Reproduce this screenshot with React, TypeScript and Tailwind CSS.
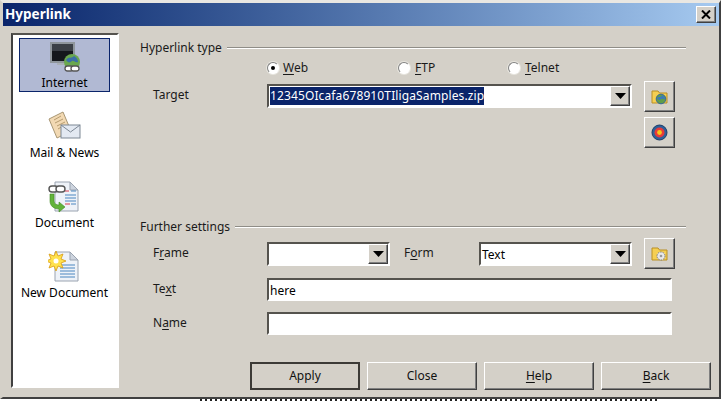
import React from "react";

const raised = "border border-t-white border-l-white border-r-[#404040] border-b-[#404040] shadow-[inset_-1px_-1px_0_#808080]";
const sunken = "border-2 border-t-[#55534e] border-l-[#55534e] border-r-white border-b-white";

function U({ children }: { children: React.ReactNode }) {
  return <span className="underline underline-offset-2 decoration-1">{children}</span>;
}

function Arrow() {
  return (
    <div className={`w-[20px] h-full bg-[#d4d0c8] flex items-center justify-center ${raised}`}>
      <svg width="11" height="6" viewBox="0 0 11 6"><path d="M0 0h11L5.5 6z" fill="#000" /></svg>
    </div>
  );
}

function Radio({ checked }: { checked?: boolean }) {
  return (
    <div className="w-[12px] h-[12px] rounded-full bg-white border border-t-[#808080] border-l-[#808080] border-r-white border-b-white flex items-center justify-center shadow-[0_0_0_1px_#e8e6e0]">
      {checked && <div className="w-[4px] h-[4px] rounded-full bg-black" />}
    </div>
  );
}

function Group({ title }: { title: string }) {
  return (
    <div className="flex items-center h-[16px] w-[546px]">
      <span className="text-[12px] leading-none text-[#1a1a1a] whitespace-nowrap">{title}</span>
      <div className="ml-[5px] grow h-[2px] border-t border-t-[#8f8d87] border-b border-b-white" />
    </div>
  );
}

function IconBtn({ children, className = "" }: { children: React.ReactNode; className?: string }) {
  return (
    <div className={`w-[31px] h-[31px] bg-[#d4d0c8] flex items-center justify-center ${raised} ${className}`}>{children}</div>
  );
}

function Monitor() {
  return (
    <svg width="32" height="32" viewBox="0 0 32 32">
      <rect x="1" y="1" width="25" height="21" fill="#8f969c" />
      <rect x="3" y="3" width="21" height="17" fill="#15181c" />
      <rect x="3" y="3" width="21" height="7" fill="#3b4046" />
      <rect x="8" y="22" width="12" height="2" fill="#aab0b6" />
      <circle cx="23" cy="21" r="8" fill="#6aa84f" />
      <path d="M17 19c3-4 6-1 8-4 2 1 4 3 4 6-3 1-4-2-6-1s-3 3-6-1z" fill="#3a6fa8" />
      <rect x="16" y="25" width="8" height="5" rx="2.5" fill="#fff" stroke="#555" strokeWidth="1.3" />
      <rect x="22" y="25" width="8" height="5" rx="2.5" fill="#fff" stroke="#555" strokeWidth="1.3" />
    </svg>
  );
}

function Mail() {
  return (
    <svg width="33" height="33" viewBox="0 0 33 33">
      <path d="M1 8 15 1l8 19-14 7z" fill="#f2d9b3" stroke="#a89674" />
      <path d="M6 9l7-4M7 12l8-4M9 15l8-4M10 18l5-3" stroke="#b69c70" />
      <rect x="13" y="14" width="19" height="13" fill="#e3e9f2" stroke="#7c8794" />
      <path d="M13 14l9.5 7L32 14" fill="none" stroke="#7c8794" />
    </svg>
  );
}

function DocBase() {
  return (
    <>
      <path d="M7 1h15l8 8v21H7z" fill="#eef2f8" stroke="#9aa3b0" />
      <path d="M22 1v8h8z" fill="#cdd4de" stroke="#9aa3b0" />
    </>
  );
}

function DocLink() {
  return (
    <svg width="33" height="32" viewBox="0 0 33 32">
      <DocBase />
      <path d="M17 10h4M17 23h5" stroke="#d63a4a" strokeWidth="1.2" />
      <path d="M17 14h11M17 17h11M17 20h11M23 23h5M23 10h5" stroke="#4a86c0" strokeWidth="1" />
      <rect x="1" y="5" width="9" height="6" rx="3" fill="#fff" stroke="#555" strokeWidth="1.4" />
      <rect x="8" y="5" width="9" height="6" rx="3" fill="#fff" stroke="#555" strokeWidth="1.4" />
      <path d="M2 13h4v7c0 3 3 4 5 4v-3l6 5-6 5v-3c-5 0-9-3-9-8z" fill="#62b33a" stroke="#3f8a22" strokeWidth=".6" />
    </svg>
  );
}

function DocNew() {
  return (
    <svg width="33" height="32" viewBox="0 0 33 32">
      <DocBase />
      <path d="M12 14h15M12 17h15M12 20h15M12 23h15M12 26h15" stroke="#4a86c0" strokeWidth="1" />
      <path d="M8 0l2 5 5-2-2 5 5 2-5 2 2 5-5-2-2 5-2-5-5 2 2-5-5-2 5-2-2-5 5 2z" fill="#ffe14d" stroke="#d89c12" strokeWidth=".8" />
      <circle cx="8" cy="10" r="2.5" fill="#fff" />
    </svg>
  );
}

function Folder({ gear }: { gear?: boolean }) {
  return (
    <svg width="17" height="17" viewBox="0 0 17 17">
      <path d="M1 3h6l1.5 2H16v10H1z" fill="#f5cf52" stroke="#b98f24" />
      {gear ? (
        <>
          <circle cx="10" cy="11" r="4" fill="#e8e8e8" stroke="#777" strokeDasharray="1.5 1" />
          <circle cx="10" cy="11" r="1.3" fill="#999" />
        </>
      ) : (
        <>
          <circle cx="10" cy="11" r="4.8" fill="#5f9e4a" stroke="#35689c" />
          <path d="M6 10c2-2 4 0 5-3 2 1 3 2 3 4-2 1-3-1-4 0s-2 2-4-1z" fill="#3a7ab8" />
        </>
      )}
    </svg>
  );
}

function Target() {
  return (
    <svg width="17" height="17" viewBox="0 0 17 17">
      <circle cx="8.5" cy="8.5" r="7.5" fill="#2d5f9a" stroke="#1c3c68" />
      <circle cx="8.5" cy="8.5" r="5" fill="#e63a3a" />
      <circle cx="8.5" cy="8.5" r="2.4" fill="#f5c518" />
    </svg>
  );
}

function NavItem({ label, icon, selected, h }: { label: string; icon: React.ReactNode; selected?: boolean; h: string }) {
  return (
    <div className={`w-[91px] ${h} flex flex-col items-center pt-[2px] border ${selected ? "bg-[#b1b9d3] border-[#0a246a]" : "border-transparent"}`}>
      <div className="h-[32px] flex items-center justify-center">{icon}</div>
      <span className="mt-[3px] text-[12px] leading-[14px] text-black whitespace-nowrap">{label}</span>
    </div>
  );
}

function Combo({ w, text, children }: { w: string; text?: string; children?: React.ReactNode }) {
  return (
    <div className={`${w} h-[24px] bg-white flex items-stretch ${sunken}`}>
      <div className={`grow pl-[1px] text-[12px] text-black whitespace-nowrap overflow-hidden ${text ? "leading-[22px]" : "leading-[20px]"}`}>
        {children ?? text}
      </div>
      <Arrow />
    </div>
  );
}

function Label({ children, className = "" }: { children: React.ReactNode; className?: string }) {
  return <div className={`text-[12px] leading-[16px] text-[#1a1a1a] ${className}`}>{children}</div>;
}

function Btn({ children, dflt }: { children: React.ReactNode; dflt?: boolean }) {
  return (
    <div className={`w-[110px] h-[28px] bg-[#d4d0c8] flex items-center justify-center text-[12px] text-[#111] ${dflt ? "border-2 border-[#3c3a36]" : raised}`}>
      {children}
    </div>
  );
}

export default function App() {
  return (
    <div className="w-[722px] h-[401px] overflow-hidden bg-white" style={{ fontFamily: '"Noto Sans", sans-serif' }}>
      <div className="w-[721px] h-[399px] bg-[#d4d0c8] border-t-[3px] border-t-[#e9e7e2] border-l-[3px] border-l-[#d4d0c8] border-r-2 border-r-[#404040] border-b-2 border-b-[#404040] flex flex-col">
        <div className="h-[23px] shrink-0 flex items-center justify-between bg-gradient-to-r from-[#0a246a] to-[#a6caf0] pl-[2px] pr-[3px]">
          <span className="text-[13.5px] font-bold text-white leading-none">Hyperlink</span>
          <div className={`w-[20px] h-[17px] bg-[#d4d0c8] flex items-center justify-center ${raised}`}>
            <svg width="10" height="9" viewBox="0 0 10 9"><path d="M1 0.5l8 8M9 0.5l-8 8" stroke="#000" strokeWidth="2" /></svg>
          </div>
        </div>
        <div className="flex grow">
          <div className="ml-[8px] mt-[7px] w-[108px] h-[355px] bg-white flex flex-col items-center pt-[3px] pr-[1px] border-2 border-t-[#55534e] border-l-[#404040] border-r-white border-b-white">
            <NavItem h="h-[54px]" selected label="Internet" icon={<Monitor />} />
            <div className="mt-[16px] flex flex-col gap-[16px]">
              <NavItem h="h-[54px]" label="Mail & News" icon={<Mail />} />
              <NavItem h="h-[54px]" label="Document" icon={<DocLink />} />
              <NavItem h="h-[54px]" label="New Document" icon={<DocNew />} />
            </div>
          </div>
          <div className="ml-[21px] flex flex-col w-[575px]">
            <div className="mt-[14px]"><Group title="Hyperlink type" /></div>
            <div className="mt-[3px] h-[18px] flex items-center">
              <div className="ml-[127px] w-[131px] flex items-center gap-[4px]"><Radio checked /><Label><U>W</U>eb</Label></div>
              <div className="w-[110px] flex items-center gap-[5px]"><Radio /><Label><U>F</U>TP</Label></div>
              <div className="flex items-center gap-[5px]"><Radio /><Label><U>T</U>elnet</Label></div>
            </div>
            <div className="flex mt-[4px] h-[139px]">
              <Label className="ml-[13px] w-[114px] mt-[6px]">Target</Label>
              <div className="mt-[3px]">
                <Combo w="w-[365px]">
                  <span className="bg-[#0a246a] text-white inline-block leading-[17px] pb-[1px] tracking-[0.12px]">12345OIcafa678910TIligaSamples.zip</span>
                </Combo>
              </div>
              <div className="ml-[12px] flex flex-col gap-[5px]">
                <IconBtn><Folder /></IconBtn>
                <IconBtn><Target /></IconBtn>
              </div>
            </div>
            <div className="mt-[-1px]"><Group title="Further settings" /></div>
            <div className="flex mt-[3px] h-[31px]">
              <Label className="ml-[13px] w-[114px] mt-[7px]">F<U>r</U>ame</Label>
              <div className="mt-[4px]"><Combo w="w-[123px]" /></div>
              <Label className="ml-[14px] w-[75px] mt-[7px]">F<U>o</U>rm</Label>
              <div className="mt-[4px]"><Combo w="w-[153px]" text="Text" /></div>
              <IconBtn className="ml-[12px]"><Folder gear /></IconBtn>
            </div>
            <div className="flex mt-[9px] h-[23px]">
              <Label className="ml-[13px] w-[114px] mt-[3px]">Te<U>x</U>t</Label>
              <div className={`w-[405px] h-[23px] bg-white pl-[1px] text-[12px] leading-[21px] text-black ${sunken}`}>here</div>
            </div>
            <div className="flex mt-[11px] h-[23px]">
              <Label className="ml-[13px] w-[114px] mt-[3px]">N<U>a</U>me</Label>
              <div className={`w-[405px] h-[23px] bg-white ${sunken}`} />
            </div>
            <div className="ml-[110px] mt-[27px] flex gap-[7px]">
              <Btn dflt>Apply</Btn>
              <Btn>Close</Btn>
              <Btn><span><U>H</U>elp</span></Btn>
              <Btn><span><U>B</U>ack</span></Btn>
            </div>
          </div>
        </div>
      </div>
      <div className="ml-[200px] w-[460px] h-[2px] bg-[repeating-linear-gradient(90deg,#222_0_2px,transparent_2px_5px)]" />
    </div>
  );
}
